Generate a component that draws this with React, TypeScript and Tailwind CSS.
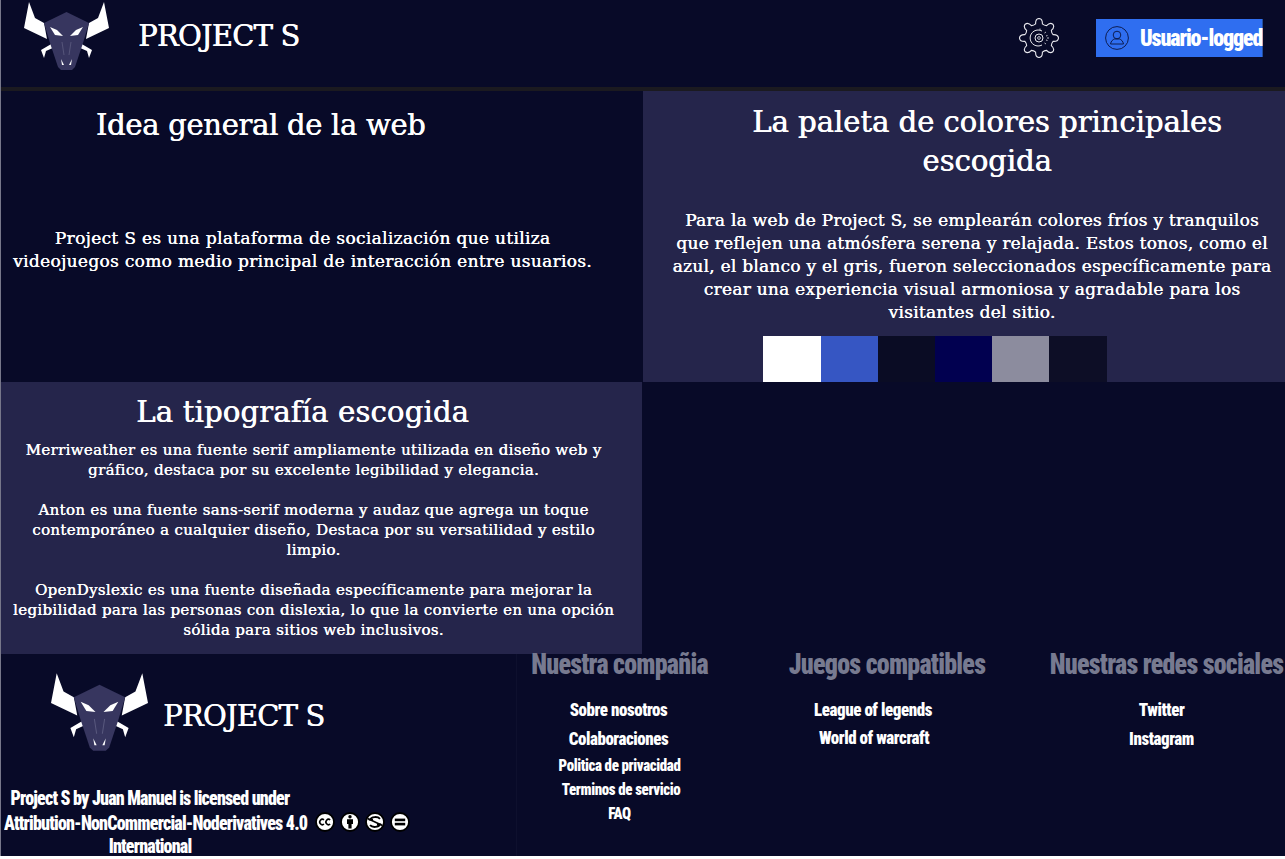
import React from "react";

const serif = "font-['DejaVu_Serif',serif] [text-shadow:0.6px_0_0_#fff]";
const bodySerif = "font-['DejaVu_Serif',serif] [text-shadow:0.35px_0_0_#fff]";
const anton = "font-['Roboto',sans-serif] font-black [font-stretch:75%] scale-y-[1.12]";

function Logo({ className }: { className: string }) {
  const mirror = (pts: number[][]) => pts.map(([x, y]) => `${85 - x},${y}`).join(" ");
  const str = (pts: number[][]) => pts.map(([x, y]) => `${x},${y}`).join(" ");
  const horn = [[5, 2], [11, 18], [20, 23], [23, 39], [0, 28]];
  const small = [[17, 50], [29, 43], [31, 47], [22, 51], [20, 58]];
  const eye = [[26, 27], [33, 30], [39, 36], [31, 35]];
  const fang = [[37, 59], [40, 65], [38, 65]];
  return (
    <svg viewBox="0 0 85 71" className={className}>
      <polygon points={str(horn)} fill="#fff" />
      <polygon points={mirror(horn)} fill="#fff" />
      <polygon points={str(small)} fill="#fff" />
      <polygon points={mirror(small)} fill="#fff" />
      <polygon points="42.5,12 65,23 59,43 51,67 48,70 37,70 34,67 26,43 20,23" fill="#37365f" />
      <polygon points={str(eye)} fill="#fff" />
      <polygon points={mirror(eye)} fill="#fff" />
      <polygon points={str(fang)} fill="#fff" />
      <polygon points={mirror(fang)} fill="#fff" />
      <path d="M38 42 L40 55 M47 42 L45 55" stroke="#6a6a8c" strokeWidth="0.6" fill="none" />
    </svg>
  );
}

function gearPath() {
  const c = 20;
  const teeth = 8;
  const pts: string[] = [];
  for (let i = 0; i < teeth; i++) {
    const a = (i * 2 * Math.PI) / teeth - Math.PI / 2;
    const step = (2 * Math.PI) / teeth;
    const p = (r: number, t: number) => `${(c + r * Math.cos(t)).toFixed(2)} ${(c + r * Math.sin(t)).toFixed(2)}`;
    pts.push(`${i === 0 ? "M" : "L"}${p(14.5, a - step * 0.3)}`);
    pts.push(`Q${p(19.5, a - step * 0.24)} ${p(19.5, a)}`);
    pts.push(`Q${p(19.5, a + step * 0.24)} ${p(14.5, a + step * 0.3)}`);
    pts.push(`Q${p(13.5, a + step * 0.5)} ${p(14.5, a + step * 0.7)}`);
  }
  return pts.join(" ") + "Z";
}

function Gear() {
  return (
    <svg viewBox="0 0 40 40" className="w-10 h-10" fill="none" stroke="#e8e8ee">
      <path d={gearPath()} strokeWidth="1.1" />
      <path d="M23 13 A8 8 0 1 0 23 27" strokeWidth="1" />
      <path d="M25.5 15 L27 14 M27 18 L28.5 17.5 M28 20 L30 20 M27 22 L28.5 22.5 M25.5 25 L27 26 M21 12 L21 10.5" strokeWidth="0.8" />
      <circle cx="20" cy="20" r="4" strokeWidth="1" />
      <circle cx="20" cy="20" r="1.4" strokeWidth="0.8" />
    </svg>
  );
}

function UserIcon() {
  return (
    <svg viewBox="0 0 24 24" className="w-6 h-6 shrink-0" fill="none" stroke="#0a1440" strokeWidth="0.9">
      <circle cx="12" cy="12" r="11.4" />
      <circle cx="12" cy="9" r="3.8" />
      <path d="M5.5 18 C6 15 8 13.5 9.5 13 L14.5 13 C16 13.5 18 15 18.5 18 Z" />
    </svg>
  );
}

function CcIcons() {
  const ring = "w-5 h-5 shrink-0";
  return (
    <div className="flex gap-[5px]">
      <svg viewBox="0 0 20 20" className={ring}>
        <circle cx="10" cy="10" r="9" fill="#fff" stroke="#000" strokeWidth="1.8" />
        <path d="M9 7.8 A2.7 2.7 0 1 0 9 12.2 M15.2 7.8 A2.7 2.7 0 1 0 15.2 12.2" fill="none" stroke="#000" strokeWidth="1.6" />
      </svg>
      <svg viewBox="0 0 20 20" className={ring}>
        <circle cx="10" cy="10" r="9" fill="#fff" stroke="#000" strokeWidth="1.8" />
        <circle cx="10" cy="4.8" r="1.7" fill="#000" />
        <path d="M7 7.2 H13 V12 H11.6 V16.5 H8.4 V12 H7 Z" fill="#000" />
      </svg>
      <svg viewBox="0 0 20 20" className={ring}>
        <circle cx="10" cy="10" r="9" fill="#fff" stroke="#000" strokeWidth="1.8" />
        <path d="M15 6.8 A5.4 3.4 0 0 0 5 7.6 L8 7.6 M5 13.2 A5.4 3.4 0 0 0 15 12.4 L12 12.4" fill="none" stroke="#000" strokeWidth="1.8" />
        <path d="M2.5 6.5 L17.5 13.5" stroke="#000" strokeWidth="1.6" />
      </svg>
      <svg viewBox="0 0 20 20" className={ring}>
        <circle cx="10" cy="10" r="9" fill="#fff" stroke="#000" strokeWidth="1.8" />
        <rect x="4.8" y="6.6" width="10.4" height="2.6" fill="#000" />
        <rect x="4.8" y="10.8" width="10.4" height="2.6" fill="#000" />
      </svg>
    </div>
  );
}

const colours = ["bg-white", "bg-[#3656c3]", "bg-[#0a0c24]", "bg-[#010050]", "bg-[#8c8c9e]", "bg-[#0d0e26]"];
const link = `${anton} text-[17px] leading-[24px] tracking-[-0.45px]`;
const smallLink = `${anton} text-[15px] leading-[22px] tracking-[-0.4px]`;

function FooterColumn({ title, className, headClass, children }: { title: string; className: string; headClass?: string; children: React.ReactNode }) {
  return (
    <div className={`flex flex-col items-center ${className}`}>
      <h3 className={`${anton} text-[26px] leading-[20px] tracking-[-0.75px] text-[#777a90] whitespace-nowrap ${headClass ?? ""}`}>{title}</h3>
      {children}
    </div>
  );
}

export default function App() {
  return (
    <div className="w-full h-[856px] bg-[#080a28] border-l border-[#77778a] flex flex-col text-white">
      <header className="h-[87px] flex items-start shrink-0 pl-[23px] pr-[22px]">
        <Logo className="w-[85px] h-[71px]" />
        <div className={`${serif} ml-[29px] mt-[18px] text-[29px] leading-[36px] tracking-[-0.8px]`}>PROJECT S</div>
        <div className="ml-auto mt-[18px] flex items-start">
          <Gear />
          <button className="ml-[37px] mt-px w-[167px] h-[38px] bg-[#2f6ef0] flex items-center pl-[9px] border-r border-[#24509f]">
            <UserIcon />
            <span className={`${anton} ml-[11px] text-[22px] leading-none tracking-[-1.1px] whitespace-nowrap`}>Usuario-logged</span>
          </button>
        </div>
      </header>
      <div className="h-1 bg-[#1b1a20] shrink-0" />
      <main className="grid grid-cols-[641px_1fr] grid-rows-[291px_272px] shrink-0">
        <section className="flex flex-col items-center">
          <h2 className={`${serif} text-[29px] leading-[40px] tracking-[-0.3px] mt-[14px] mr-[122px]`}>Idea general de la web</h2>
          <p className={`${bodySerif} mt-[82px] -ml-[38px] text-[17px] leading-[23px] tracking-[0.32px] text-center whitespace-nowrap`}>
            Project S es una plataforma de socialización que utiliza
            <br />
            videojuegos como medio principal de interacción entre usuarios.
          </p>
        </section>
        <section className="bg-[#25254b] ml-px flex flex-col items-center">
          <h2 className={`${serif} text-[29px] leading-[39px] text-center mt-[12px] ml-[46px]`}>
            La paleta de colores principales
            <br />
            escogida
          </h2>
          <p className={`${bodySerif} mt-[28px] ml-[16px] text-[17px] leading-[23px] tracking-[0.25px] text-center whitespace-nowrap`}>
            Para la web de Project S, se emplearán colores fríos y tranquilos
            <br />
            que reflejen una atmósfera serena y relajada. Estos tonos, como el
            <br />
            azul, el blanco y el gris, fueron seleccionados específicamente para
            <br />
            crear una experiencia visual armoniosa y agradable para los
            <br />
            visitantes del sitio.
          </p>
          <div className="mt-auto flex -ml-[58px]">
            {colours.map((c) => (
              <div key={c} className={`w-[57.2px] h-[46px] ${c}`} />
            ))}
          </div>
        </section>
        <section className="bg-[#25254b] flex flex-col items-center">
          <h2 className={`${serif} text-[29px] leading-[40px] tracking-[0.2px] mt-[10px] -ml-[38px]`}>La tipografía escogida</h2>
          <div className={`${bodySerif} mt-[8px] -ml-[16px] text-[15px] leading-[20px] tracking-[0.32px] text-center whitespace-nowrap flex flex-col gap-[20px]`}>
            <p>
              Merriweather es una fuente serif ampliamente utilizada en diseño web y
              <br />
              gráfico, destaca por su excelente legibilidad y elegancia.
            </p>
            <p>
              Anton es una fuente sans-serif moderna y audaz que agrega un toque
              <br />
              contemporáneo a cualquier diseño, Destaca por su versatilidad y estilo
              <br />
              limpio.
            </p>
            <p>
              OpenDyslexic es una fuente diseñada específicamente para mejorar la
              <br />
              legibilidad para las personas con dislexia, lo que la convierte en una opción
              <br />
              sólida para sitios web inclusivos.
            </p>
          </div>
        </section>
        <section />
      </main>
      <footer className="flex-1 flex min-h-0">
        <div className="w-[516px] shrink-0 flex flex-col border-r border-[#0e102e]">
          <div className="flex items-start pl-[50px] pt-[16px]">
            <Logo className="w-[97px] h-[83px]" />
            <div className={`${serif} ml-[15px] mt-[28px] text-[29px] leading-[36px] tracking-[-0.8px]`}>PROJECT S</div>
          </div>
          <div className="flex items-center mt-[37px]">
            <p className={`${anton} w-[292px] ml-[3px] text-[18px] leading-[21.5px] tracking-[-0.8px] text-center whitespace-nowrap`}>
              Project S by Juan Manuel is licensed under
              <br />
              Attribution-NonCommercial-Noderivatives 4.0
              <br />
              International
            </p>
            <div className="ml-[19px]">
              <CcIcons />
            </div>
          </div>
        </div>
        <FooterColumn title="Nuestra compañia" className="w-[205px] shrink-0">
          <a className={`${link} mt-[23px] -ml-[2px]`}>Sobre nosotros</a>
          <a className={`${link} mt-[5px] -ml-[2px]`}>Colaboraciones</a>
          <a className={`${smallLink} mt-[4px]`}>Politica de privacidad</a>
          <a className={`${smallLink} mt-[2px] ml-[3px]`}>Terminos de servicio</a>
          <a className={`${smallLink} mt-[2px]`}>FAQ</a>
        </FooterColumn>
        <FooterColumn title="Juegos compatibles" className="w-[330px] shrink-0">
          <a className={`${link} mt-[23px] -ml-[28px]`}>League of legends</a>
          <a className={`${link} mt-[4px] -ml-[26px]`}>World of warcraft</a>
        </FooterColumn>
        <FooterColumn title="Nuestras redes sociales" className="flex-1 min-w-0" headClass="-ml-[4px]">
          <a className={`${link} mt-[23px] -ml-[14px]`}>Twitter</a>
          <a className={`${link} mt-[5px] -ml-[14px]`}>Instagram</a>
        </FooterColumn>
      </footer>
    </div>
  );
}
